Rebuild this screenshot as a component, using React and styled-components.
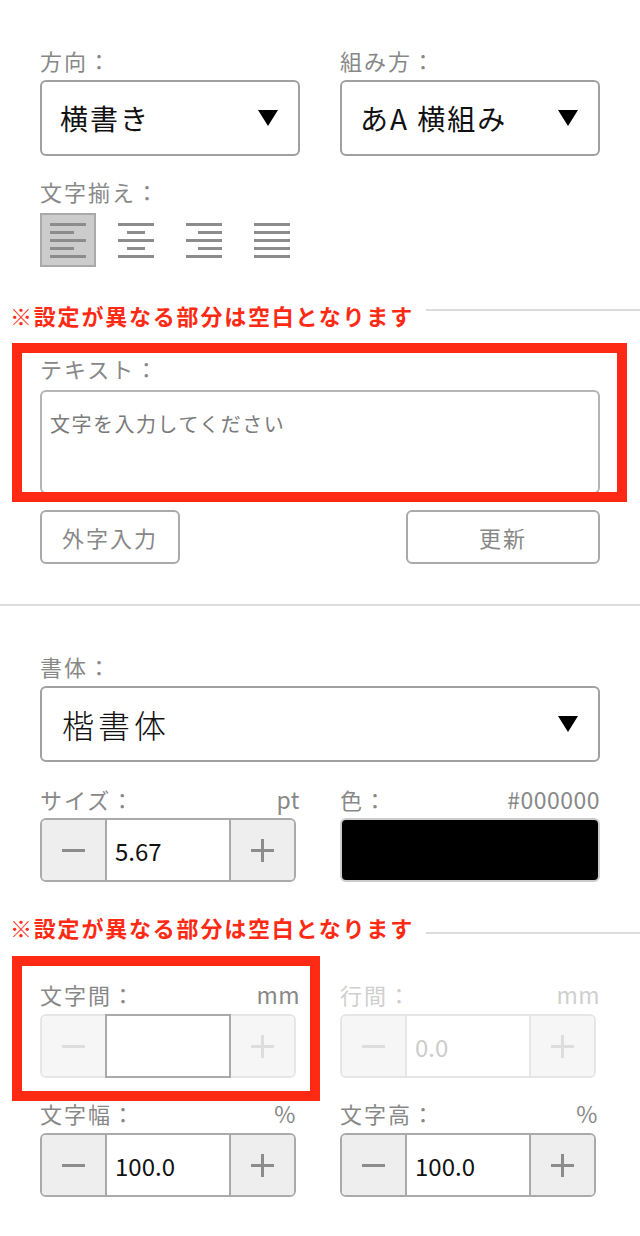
import React from "react";
import styled, { createGlobalStyle } from "styled-components";

const Global = createGlobalStyle`
  html, body { margin: 0; padding: 0; background: #fff; }
  body { font-family: "Noto Sans CJK JP", "Noto Sans", sans-serif; color: #111; }
  * { box-sizing: border-box; }
`;

const RED = "#ff2a14";

const Page = styled.div`
  width: 640px;
  padding-bottom: 40px;
`;

const Section = styled.section`
  padding-top: 46px;
`;

const Padded = styled.div`
  padding: 0 40px;
  margin-top: ${(p) => p.$mt || 0}px;
`;

const TwoCol = styled.div`
  display: grid;
  grid-template-columns: 260px 260px;
  column-gap: 40px;
  padding: 0 40px;
  margin-top: ${(p) => p.$mt || 0}px;
`;

const Field = styled.div`
  position: relative;
  display: flex;
  flex-direction: column;
`;

const Label = styled.div`
  display: flex;
  justify-content: space-between;
  align-items: baseline;
  font-size: 22px;
  letter-spacing: 2px;
  line-height: 28px;
  height: 28px;
  color: ${(p) => (p.$disabled ? "#cfcfcf" : "#888")};
  margin-bottom: ${(p) => (p.$mb != null ? p.$mb : 6)}px;
`;

const Unit = styled.span`
  font-size: 23px;
  letter-spacing: 0.5px;
  margin-right: ${(p) => p.$mr || 0}px;
`;

const Select = styled.div`
  display: flex;
  align-items: center;
  justify-content: space-between;
  height: 76px;
  border: 2px solid #a0a0a0;
  border-radius: 6px;
  padding: 0 20px 0 ${(p) => p.$pl || 18}px;
  font-size: ${(p) => p.$fs || 28}px;
  letter-spacing: ${(p) => p.$ls != null ? p.$ls : 2}px;
  font-weight: ${(p) => p.$fw || 400};
  color: #111;
  background: #fff;
`;

const Caret = () => (
  <svg width="20" height="16" viewBox="0 0 20 16">
    <polygon points="0,0 20,0 10,16" fill="#000" />
  </svg>
);

const AlignRow = styled.div`
  display: flex;
  gap: 12px;
`;

const AlignButton = styled.div`
  width: 56px;
  height: 54px;
  display: flex;
  align-items: center;
  justify-content: center;
  background: ${(p) => (p.$active ? "#cccccc" : "transparent")};
  border: 2px solid ${(p) => (p.$active ? "#aaaaaa" : "transparent")};
`;

const AlignIcon = ({ mode }) => {
  const rows = [0, 1, 2, 3, 4];
  return (
    <svg width="36" height="35" viewBox="0 0 36 35">
      {rows.map((i) => {
        const short = i % 2 === 1 && mode !== "justify";
        const w = short ? (mode === "center" ? 18 : 24) : 36;
        const x = !short ? 0 : mode === "center" ? 9 : mode === "right" ? 12 : 0;
        return <rect key={i} x={x} y={i * 8} width={w} height="3" fill="#8c8c8c" />;
      })}
    </svg>
  );
};

const WarningRow = styled.div`
  display: flex;
  align-items: flex-start;
  padding-left: 10px;
  margin-top: ${(p) => p.$mt}px;
`;

const WarningText = styled.div`
  font-size: 22px;
  font-weight: 700;
  letter-spacing: 1.8px;
  line-height: 30px;
  color: ${RED};
  white-space: nowrap;
`;

const WarningLine = styled.div`
  flex: 1;
  height: 2px;
  background: #dcdcdc;
  margin-left: 12px;
  margin-top: ${(p) => p.$offset}px;
`;

const Warning = ({ mt, offset }) => (
  <WarningRow $mt={mt}>
    <WarningText>※設定が異なる部分は空白となります</WarningText>
    <WarningLine $offset={offset} />
  </WarningRow>
);

const Group = styled.div`
  position: relative;
  padding: 0 40px;
  margin-top: ${(p) => p.$mt || 0}px;
`;

const Highlight = styled.div`
  position: absolute;
  top: ${(p) => p.$t}px;
  bottom: ${(p) => p.$b}px;
  left: ${(p) => p.$l}px;
  right: ${(p) => p.$r}px;
  border: 10px solid ${RED};
  pointer-events: none;
`;

const TextArea = styled.textarea`
  display: block;
  width: 560px;
  height: 104px;
  border: 2px solid #b4b4b4;
  border-radius: 6px;
  padding: 18px 8px;
  resize: none;
  font-family: inherit;
  font-size: 20px;
  letter-spacing: 1.5px;
  line-height: 28px;
  background: #fff;
  &::placeholder { color: #7a7a7a; }
`;

const ButtonRow = styled.div`
  display: flex;
  justify-content: space-between;
  padding: 0 40px;
  margin-top: 16px;
`;

const Button = styled.button`
  width: ${(p) => p.$w}px;
  height: 54px;
  border: 2px solid #aaaaaa;
  border-radius: 6px;
  background: #fff;
  color: #888;
  font-family: inherit;
  font-size: 22px;
  letter-spacing: 2px;
  padding: 0;
`;

const Divider = styled.hr`
  margin: 40px 0 0;
  border: 0;
  height: 2px;
  background: #dcdcdc;
`;

const StepperBox = styled.div`
  display: flex;
  width: 256px;
  height: 64px;
  border: 2px solid ${(p) => (p.$disabled ? "#e6e6e6" : "#aaaaaa")};
  border-radius: 6px;
  overflow: visible;
`;

const StepButton = styled.div`
  width: 63px;
  flex: none;
  display: flex;
  align-items: center;
  justify-content: center;
  background: ${(p) => (p.$disabled ? "#f6f6f6" : "#eeeeee")};
  border-radius: ${(p) => (p.$side === "l" ? "4px 0 0 4px" : "0 4px 4px 0")};
`;

const StepInput = styled.input`
  flex: none;
  width: 126px;
  min-width: 0;
  border: 0;
  border-left: 2px solid ${(p) => (p.$disabled ? "#e6e6e6" : "#aaaaaa")};
  border-right: 2px solid ${(p) => (p.$disabled ? "#e6e6e6" : "#aaaaaa")};
  ${(p) => p.$focus && `
    border: 2px solid #aaaaaa;
    margin: -2px 0;
    height: 64px;
  `}
  background: #fff;
  padding: 0 0 0 8px;
  font-family: inherit;
  font-size: 24px;
  color: ${(p) => (p.$disabled ? "#cccccc" : "#111")};
  outline: none;
`;

const MinusIcon = ({ c }) => (
  <svg width="23" height="23" viewBox="0 0 23 23">
    <rect x="0" y="10" width="23" height="3" fill={c} />
  </svg>
);
const PlusIcon = ({ c }) => (
  <svg width="23" height="23" viewBox="0 0 23 23">
    <rect x="0" y="10" width="23" height="3" fill={c} />
    <rect x="10" y="0" width="3" height="23" fill={c} />
  </svg>
);

const Stepper = ({ value, disabled, focus, dimButtons }) => {
  const dim = disabled || dimButtons;
  const c = dim ? "#dddddd" : "#8c8c8c";
  return (
    <StepperBox $disabled={dim}>
      <StepButton $side="l" $disabled={dim}><MinusIcon c={c} /></StepButton>
      <StepInput readOnly value={value} $disabled={disabled} $focus={focus} />
      <StepButton $side="r" $disabled={dim}><PlusIcon c={c} /></StepButton>
    </StepperBox>
  );
};

const Swatch = styled.div`
  width: 260px;
  height: 64px;
  background: ${(p) => p.$color};
  border: 2px solid #cccccc;
  border-radius: 6px;
`;

export default function App() {
  return (
    <Page>
      <Global />
      <Section>
        <TwoCol>
          <Field>
            <Label>方向：</Label>
            <Select>横書き<Caret /></Select>
          </Field>
          <Field>
            <Label>組み方：</Label>
            <Select>あA 横組み<Caret /></Select>
          </Field>
        </TwoCol>
        <Padded $mt={21}>
          <Label $mb={8}>文字揃え：</Label>
          <AlignRow>
            <AlignButton $active><AlignIcon mode="left" /></AlignButton>
            <AlignButton><AlignIcon mode="center" /></AlignButton>
            <AlignButton><AlignIcon mode="right" /></AlignButton>
            <AlignButton><AlignIcon mode="justify" /></AlignButton>
          </AlignRow>
        </Padded>
        <Warning mt={33} offset={9} />
        <Group $mt={24}>
          <Label $mb={8}>テキスト：</Label>
          <TextArea placeholder="文字を入力してください" />
          <Highlight $t={-11} $b={-8} $l={12} $r={13} />
        </Group>
        <ButtonRow>
          <Button $w={140}>外字入力</Button>
          <Button $w={194}>更新</Button>
        </ButtonRow>
      </Section>
      <Divider />
      <Section>
        <Padded>
          <Label>書体：</Label>
          <Select $fs={32} $ls={4} $fw={300} $pl={20}>楷書体<Caret /></Select>
        </Padded>
        <TwoCol $mt={23}>
          <Field>
            <Label $mb={5}>サイズ：<Unit>pt</Unit></Label>
            <Stepper value="5.67" />
          </Field>
          <Field>
            <Label $mb={5}>色：<Unit>#000000</Unit></Label>
            <Swatch $color="#000" />
          </Field>
        </TwoCol>
        <Warning mt={30} offset={20} />
        <TwoCol $mt={38}>
          <Field>
            <Label>文字間：<Unit>mm</Unit></Label>
            <Stepper value="" dimButtons focus />
            <Highlight $t={-24} $b={-23} $l={-28} $r={-20} />
          </Field>
          <Field>
            <Label $disabled>行間：<Unit>mm</Unit></Label>
            <Stepper value="0.0" disabled />
          </Field>
        </TwoCol>
        <TwoCol $mt={21}>
          <Field>
            <Label>文字幅：<Unit $mr={4}>%</Unit></Label>
            <Stepper value="100.0" />
          </Field>
          <Field>
            <Label>文字高：<Unit $mr={2}>%</Unit></Label>
            <Stepper value="100.0" />
          </Field>
        </TwoCol>
      </Section>
    </Page>
  );
}
